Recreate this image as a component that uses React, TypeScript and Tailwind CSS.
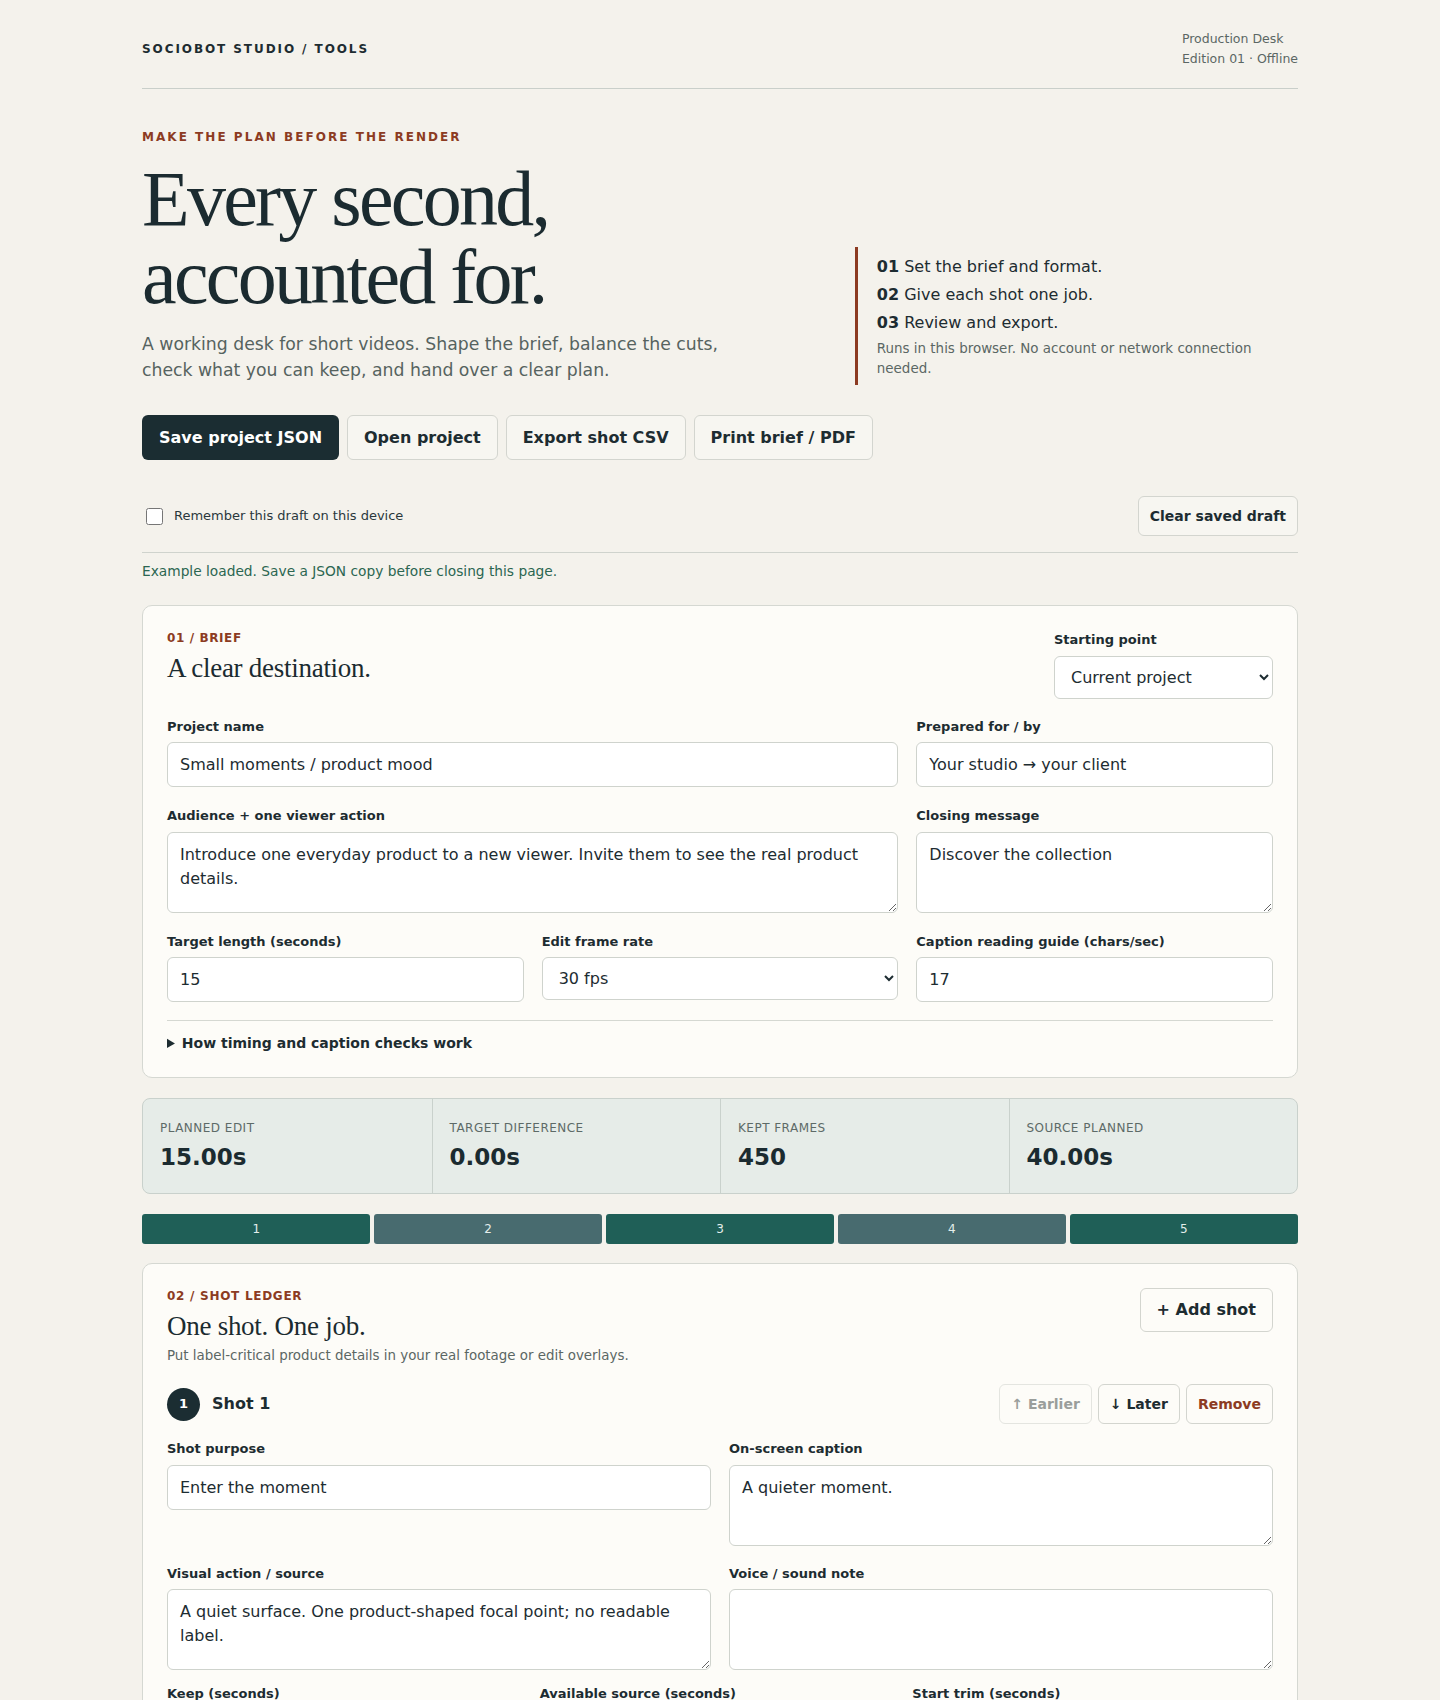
import React from "react";

const inputCls =
  "block w-full h-[45px] rounded-md border border-[#cfd3cd] bg-white px-3 text-[16px] text-[#1d2c31] outline-none";
const selectCls =
  "block w-full h-[43px] rounded-md border border-[#cfd3cd] bg-white px-3 text-[16px] text-[#1d2c31] outline-none";
const areaCls =
  "block w-full h-[81px] rounded-md border border-[#cfd3cd] bg-white px-3 py-[10px] text-[16px] leading-6 text-[#1d2c31] outline-none";
const labelCls = "block text-[13px] font-bold leading-[19.5px] mb-[6px] text-[#1d2c31]";
const btnCls =
  "h-[45px] px-[16px] rounded-md border border-[#d3d5cf] bg-[#f7f6f1] text-[16px] font-bold text-[#1d2c31]";

function Field({ label, children, className = "" }: { label: string; children: React.ReactNode; className?: string }) {
  return (
    <div className={className}>
      <label className={labelCls}>{label}</label>
      {children}
    </div>
  );
}

const stats = [
  { label: "PLANNED EDIT", value: "15.00s" },
  { label: "TARGET DIFFERENCE", value: "0.00s" },
  { label: "KEPT FRAMES", value: "450" },
  { label: "SOURCE PLANNED", value: "40.00s" },
];

export default function App() {
  return (
    <div className="min-h-screen bg-[#f4f2ec] text-[#1d2c31] font-['DejaVu_Sans',sans-serif]">
      <div className="max-w-[1156px] mx-auto pb-16">
        <header className="flex items-center justify-between pt-[29px] pb-[20px] border-b border-[#c9cfca]">
          <div className="text-[12px] font-bold tracking-[0.16em] leading-4">SOCIOBOT STUDIO / TOOLS</div>
          <div className="text-[12.5px] leading-[19.5px] text-[#5b6764]">
            <div>Production Desk</div>
            <div>Edition 01 · Offline</div>
          </div>
        </header>

        <section className="mt-10 grid grid-cols-[1.5fr_1fr] gap-12 items-end">
          <div>
            <p className="text-[12px] font-bold tracking-[0.17em] leading-4 text-[#8c3b22]">
              MAKE THE PLAN BEFORE THE RENDER
            </p>
            <h1 className="mt-[15px] font-['Liberation_Serif',serif] text-[78px] leading-[78px] tracking-[-0.035em] font-normal text-[#1b2b30]">
              Every second,
              <br />
              accounted for.
            </h1>
            <p className="mt-4 max-w-[610px] text-[17.25px] leading-[25.5px] text-[#56635f]">
              A working desk for short videos. Shape the brief, balance the cuts, check what you can keep, and hand
              over a clear plan.
            </p>
          </div>
          <div className="border-l-[3px] border-[#8c3b22] pl-[19px] py-[6px] mb-[-2px]">
            <p className="text-[16px] leading-[28px]">
              <b>01</b> Set the brief and format.
            </p>
            <p className="text-[16px] leading-[28px]">
              <b>02</b> Give each shot one job.
            </p>
            <p className="text-[16px] leading-[28px]">
              <b>03</b> Review and export.
            </p>
            <p className="mt-[2px] text-[13.45px] leading-[20px] text-[#5b6764]">
              Runs in this browser. No account or network connection needed.
            </p>
          </div>
        </section>

        <div className="mt-8 flex gap-2">
          <button className="h-[45px] px-[17px] rounded-md bg-[#1b2d32] text-[16px] font-bold text-white">
            Save project JSON
          </button>
          <button className={btnCls}>Open project</button>
          <button className={btnCls}>Export shot CSV</button>
          <button className={btnCls}>Print brief / PDF</button>
        </div>

        <div className="mt-9 flex items-center justify-between pb-4 border-b border-[#cfd3cd]">
          <label className="flex items-center gap-[11px] text-[13px] text-[#2a383c]">
            <input type="checkbox" className="ml-1 w-[17px] h-[17px] m-0" />
            Remember this draft on this device
          </label>
          <button className="h-[40px] px-[11px] rounded-md border border-[#d3d5cf] bg-[#f7f6f1] text-[14px] font-bold text-[#1d2c31]">
            Clear saved draft
          </button>
        </div>
        <p className="pt-2 text-[13.75px] leading-5 text-[#2b6651]">
          Example loaded. Save a JSON copy before closing this page.
        </p>

        <div className="mt-6 flex flex-col gap-5">
          {/* BRIEF */}
          <section className="rounded-[10px] border border-[#d5d8d2] bg-[#fdfcf8] p-6">
            <div className="flex items-start justify-between">
              <div>
                <p className="text-[12px] font-bold tracking-[0.05em] leading-4 text-[#8c3b22]">01 / BRIEF</p>
                <h2 className="mt-[6px] font-['Liberation_Serif',serif] text-[27px] leading-[32px] tracking-[-0.01em] text-[#1b2b30]">
                  A clear destination.
                </h2>
              </div>
              <div className="w-[219px]">
                <label className={labelCls}>Starting point</label>
                <select className={selectCls} defaultValue="current">
                  <option value="current">Current project</option>
                  <option value="blank">Blank project</option>
                </select>
              </div>
            </div>

            <div className="mt-[18px] grid grid-cols-3 gap-x-[18px] gap-y-[19px]">
              <Field label="Project name" className="col-span-2">
                <input className={inputCls} defaultValue="Small moments / product mood" />
              </Field>
              <Field label="Prepared for / by">
                <input className={inputCls} defaultValue="Your studio → your client" />
              </Field>
              <Field label="Audience + one viewer action" className="col-span-2">
                <textarea
                  className={areaCls}
                  defaultValue="Introduce one everyday product to a new viewer. Invite them to see the real product details."
                />
              </Field>
              <Field label="Closing message">
                <textarea className={areaCls} defaultValue="Discover the collection" />
              </Field>
              <Field label="Target length (seconds)">
                <input className={inputCls} defaultValue="15" />
              </Field>
              <Field label="Edit frame rate">
                <select className={selectCls} defaultValue="30">
                  <option value="24">24 fps</option>
                  <option value="25">25 fps</option>
                  <option value="30">30 fps</option>
                  <option value="60">60 fps</option>
                </select>
              </Field>
              <Field label="Caption reading guide (chars/sec)">
                <input className={inputCls} defaultValue="17" />
              </Field>
            </div>

            <div className="mt-[18px] border-t border-[#d5d8d2] pt-3">
              <details>
                <summary className="text-[14px] font-bold leading-5 cursor-pointer">
                  How timing and caption checks work
                </summary>
              </details>
            </div>
          </section>

          {/* STATS */}
          <div className="grid grid-cols-4 rounded-lg border border-[#c9d1cc] bg-[#e6ece8]">
            {stats.map((s, i) => (
              <div
                key={s.label}
                className={i > 0 ? "px-[17px] pt-[20px] pb-[21px] border-l border-[#c9d1cc]" : "px-[17px] pt-[20px] pb-[21px]"}
              >
                <div className="text-[12px] leading-[18px] tracking-[0.04em] text-[#5d6a67]">{s.label}</div>
                <div className="mt-[6px] text-[23px] leading-[29px] font-bold text-[#1b2b30]">{s.value}</div>
              </div>
            ))}
          </div>

          {/* TIMELINE */}
          <div className="flex gap-[3.5px]">
            {[1, 2, 3, 4, 5].map((n) => (
              <div
                key={n}
                className={
                  n % 2 === 1
                    ? "flex-1 h-[30px] rounded-[3px] bg-[#1f5f57] flex items-center justify-center text-[12px] text-[#e4eeeb]"
                    : "flex-1 h-[30px] rounded-[3px] bg-[#486b6f] flex items-center justify-center text-[12px] text-[#e4eeeb]"
                }
              >
                {n}
              </div>
            ))}
          </div>

          {/* SHOT LEDGER */}
          <section className="-mt-[1px] rounded-[10px] border border-[#d5d8d2] bg-[#fdfcf8] p-6">
            <div className="flex items-start justify-between">
              <div>
                <p className="text-[12px] font-bold tracking-[0.06em] leading-4 text-[#8c3b22]">02 / SHOT LEDGER</p>
                <h2 className="mt-[6px] font-['Liberation_Serif',serif] text-[27px] leading-[32px] tracking-[-0.01em] text-[#1b2b30]">
                  One shot. One job.
                </h2>
                <p className="mt-1 text-[13.4px] leading-5 text-[#5b6764]">
                  Put label-critical product details in your real footage or edit overlays.
                </p>
              </div>
              <button className="h-[44px] px-[16px] rounded-md border border-[#d3d5cf] bg-[#fdfcf8] text-[16px] font-bold text-[#1d2c31]">
                + Add shot
              </button>
            </div>

            <div className="mt-[18px] flex items-center justify-between h-[40px]">
              <div className="flex items-center gap-3">
                <span className="w-[33px] h-[33px] rounded-full bg-[#1b2d32] text-white text-[13px] font-bold flex items-center justify-center">
                  1
                </span>
                <span className="text-[16px] font-bold">Shot 1</span>
              </div>
              <div className="flex gap-[6px]">
                <button className="h-[40px] px-[11px] rounded-md border border-[#e4e5e0] bg-[#fdfcf8] text-[14px] font-bold text-[#9a9e9b]">
                  ↑ Earlier
                </button>
                <button className="h-[40px] px-[11px] rounded-md border border-[#d3d5cf] bg-[#fdfcf8] text-[14px] font-bold text-[#1d2c31]">
                  ↓ Later
                </button>
                <button className="h-[40px] px-[11px] rounded-md border border-[#d3d5cf] bg-[#fdfcf8] text-[14px] font-bold text-[#8c3b22]">
                  Remove
                </button>
              </div>
            </div>

            <div className="mt-[15px] grid grid-cols-2 gap-x-[18px] gap-y-[18px] items-start">
              <Field label="Shot purpose">
                <input className={inputCls} defaultValue="Enter the moment" />
              </Field>
              <Field label="On-screen caption">
                <textarea className={areaCls} defaultValue="A quieter moment." />
              </Field>
              <Field label="Visual action / source">
                <textarea
                  className={areaCls}
                  defaultValue="A quiet surface. One product-shaped focal point; no readable label."
                />
              </Field>
              <Field label="Voice / sound note">
                <textarea className={areaCls} defaultValue="" />
              </Field>
            </div>

            <div className="mt-[14px] grid grid-cols-3 gap-x-3">
              <Field label="Keep (seconds)">
                <input className={inputCls} defaultValue="3" />
              </Field>
              <Field label="Available source (seconds)">
                <input className={inputCls} defaultValue="8" />
              </Field>
              <Field label="Start trim (seconds)">
                <input className={inputCls} defaultValue="0" />
              </Field>
            </div>
          </section>
        </div>
      </div>
    </div>
  );
}
